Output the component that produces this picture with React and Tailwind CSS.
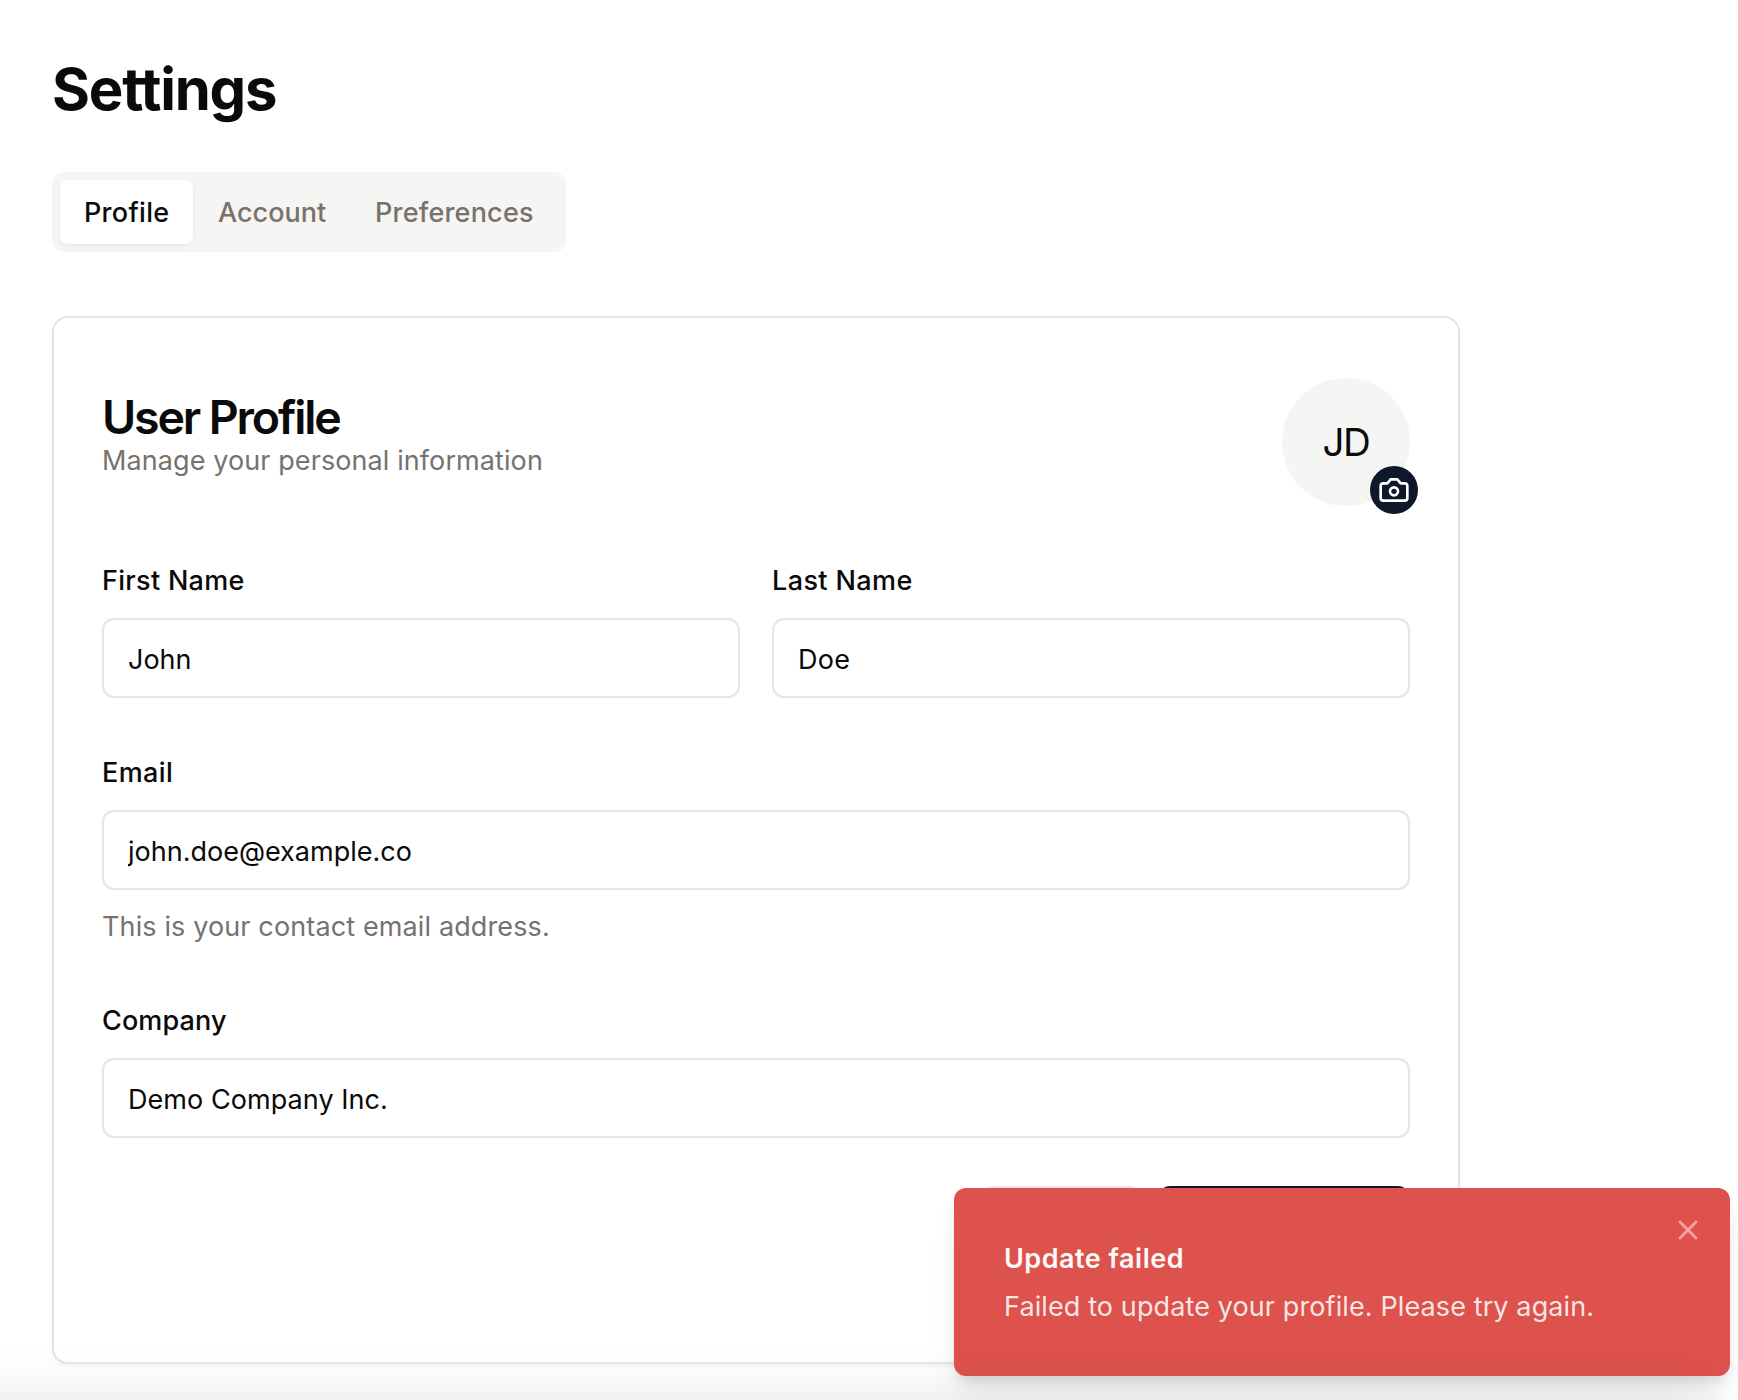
import { X } from "lucide-react";

function CameraIcon({ className }) {
  return (
    <svg
      viewBox="0 0 24 24"
      fill="none"
      stroke="currentColor"
      strokeWidth="2"
      strokeLinecap="round"
      strokeLinejoin="round"
      className={className}
    >
      <path d="M14.5 4h-5L7 7H4a2 2 0 0 0-2 2v9a2 2 0 0 0 2 2h16a2 2 0 0 0 2-2V9a2 2 0 0 0-2-2h-3l-2.5-3z" />
      <circle cx="12" cy="13" r="3" />
    </svg>
  );
}

function Field({ label, value, hint, labelClass = "", inputClass = "" }) {
  return (
    <label className="block">
      <span className={`block h-7 text-[27px] leading-[30px] font-medium ${labelClass}`}>{label}</span>
      <input
        readOnly
        value={value}
        className={`mt-6 block h-20 w-full rounded-xl border-2 border-[#e5e5e5] bg-white px-6 pt-0.5 text-[27px] outline-none ${inputClass}`}
      />
      {hint && (
        <span className="mt-4 block h-10 text-[27px] leading-[42px] tracking-[0.127px] text-[#78716c]">{hint}</span>
      )}
    </label>
  );
}

function Tabs() {
  return (
    <div className="mt-[47px] flex h-20 w-[514px] rounded-xl bg-[#f5f5f4] p-2 text-[27px] font-medium text-[#78716c]">
      <button className="w-[133px] rounded-lg bg-white pt-0.5 pl-6 text-left tracking-[0.3px] text-[#0a0a0a] shadow-[0_2px_4px_rgba(0,0,0,0.05)]">
        Profile
      </button>
      <button className="w-[157px] pt-0.5 pl-[25px] text-left tracking-[0.03px]">Account</button>
      <button className="w-[208px] pt-0.5 pl-[25px] text-left tracking-[0.2px]">Preferences</button>
    </div>
  );
}

function Toast() {
  return (
    <div className="absolute top-[1188px] left-[954px] h-[188px] w-[776px] rounded-xl bg-[#de524d] px-[50px] pt-[51px] text-[#fafaf9] shadow-[0_20px_30px_-6px_rgba(0,0,0,0.1),0_8px_12px_-4px_rgba(0,0,0,0.1)]">
      <div className="text-[27px] leading-10 font-semibold tracking-[0.5px]">Update failed</div>
      <div className="mt-2 text-[27px] leading-10 tracking-[0.11px] whitespace-nowrap text-[#fafaf9]/90">
        Failed to update your profile. Please try again.
      </div>
      <X className="absolute top-[26px] right-[26px] size-8 text-[#f3a5a3]" strokeWidth={2} />
    </div>
  );
}

export default function App() {
  return (
    <div className="relative h-[1400px] w-[1738px] overflow-hidden bg-white pt-[53px] pl-[52px] font-['Inter',sans-serif] text-[#0a0a0a]">
      <h1 className="h-[72px] text-[58px] leading-[72px] font-bold tracking-[-1.2px]">Settings</h1>
      <Tabs />
      <main className="mt-16 h-[1048px] w-[1408px] rounded-2xl border-2 border-[#e5e5e5] bg-white px-12 pt-[60px] shadow-[0_2px_4px_rgba(0,0,0,0.05)]">
        <header className="flex h-32 items-start justify-between">
          <div className="pt-[15px]">
            <h2 className="text-[46.5px] leading-[48px] font-semibold tracking-[-2.15px]">User Profile</h2>
            <p className="text-[27px] leading-10 tracking-[0.09px] text-[#78716c]">
              Manage your personal information
            </p>
          </div>
          <div className="relative flex size-32 items-center justify-center rounded-full bg-[#f5f5f4]">
            <span className="pt-0.5 text-[38.5px] tracking-[-1.5px]">JD</span>
            <button className="absolute -right-2 -bottom-2 flex size-12 items-center justify-center rounded-full bg-[#0f172a] text-white">
              <CameraIcon className="size-8" />
            </button>
          </div>
        </header>
        <form className="mt-[60px] flex flex-col gap-[60px]">
          <div className="grid grid-cols-2 gap-8">
            <Field label="First Name" value="John" labelClass="tracking-[0.3px]" inputClass="tracking-[0px]" />
            <Field label="Last Name" value="Doe" labelClass="tracking-[0.4px]" inputClass="tracking-[0.3px]" />
          </div>
          <Field
            label="Email"
            value="john.doe@example.co"
            hint="This is your contact email address."
            labelClass="tracking-[0.4px]"
          />
          <Field
            label="Company"
            value="Demo Company Inc."
            labelClass="tracking-[0.13px]"
            inputClass="tracking-[0.06px]"
          />
        </form>
        <div className="mt-12 flex justify-end gap-4">
          <div className="h-20 w-[160px] rounded-xl border-2 border-[#e5e5e5] bg-white" />
          <div className="h-20 w-[252px] rounded-xl bg-[#0f172a]" />
        </div>
      </main>
      <Toast />
      <div className="pointer-events-none absolute top-[1400px] -left-24 h-40 w-[1800px] shadow-[0_0_60px_rgba(0,0,0,0.11)]" />
    </div>
  );
}
